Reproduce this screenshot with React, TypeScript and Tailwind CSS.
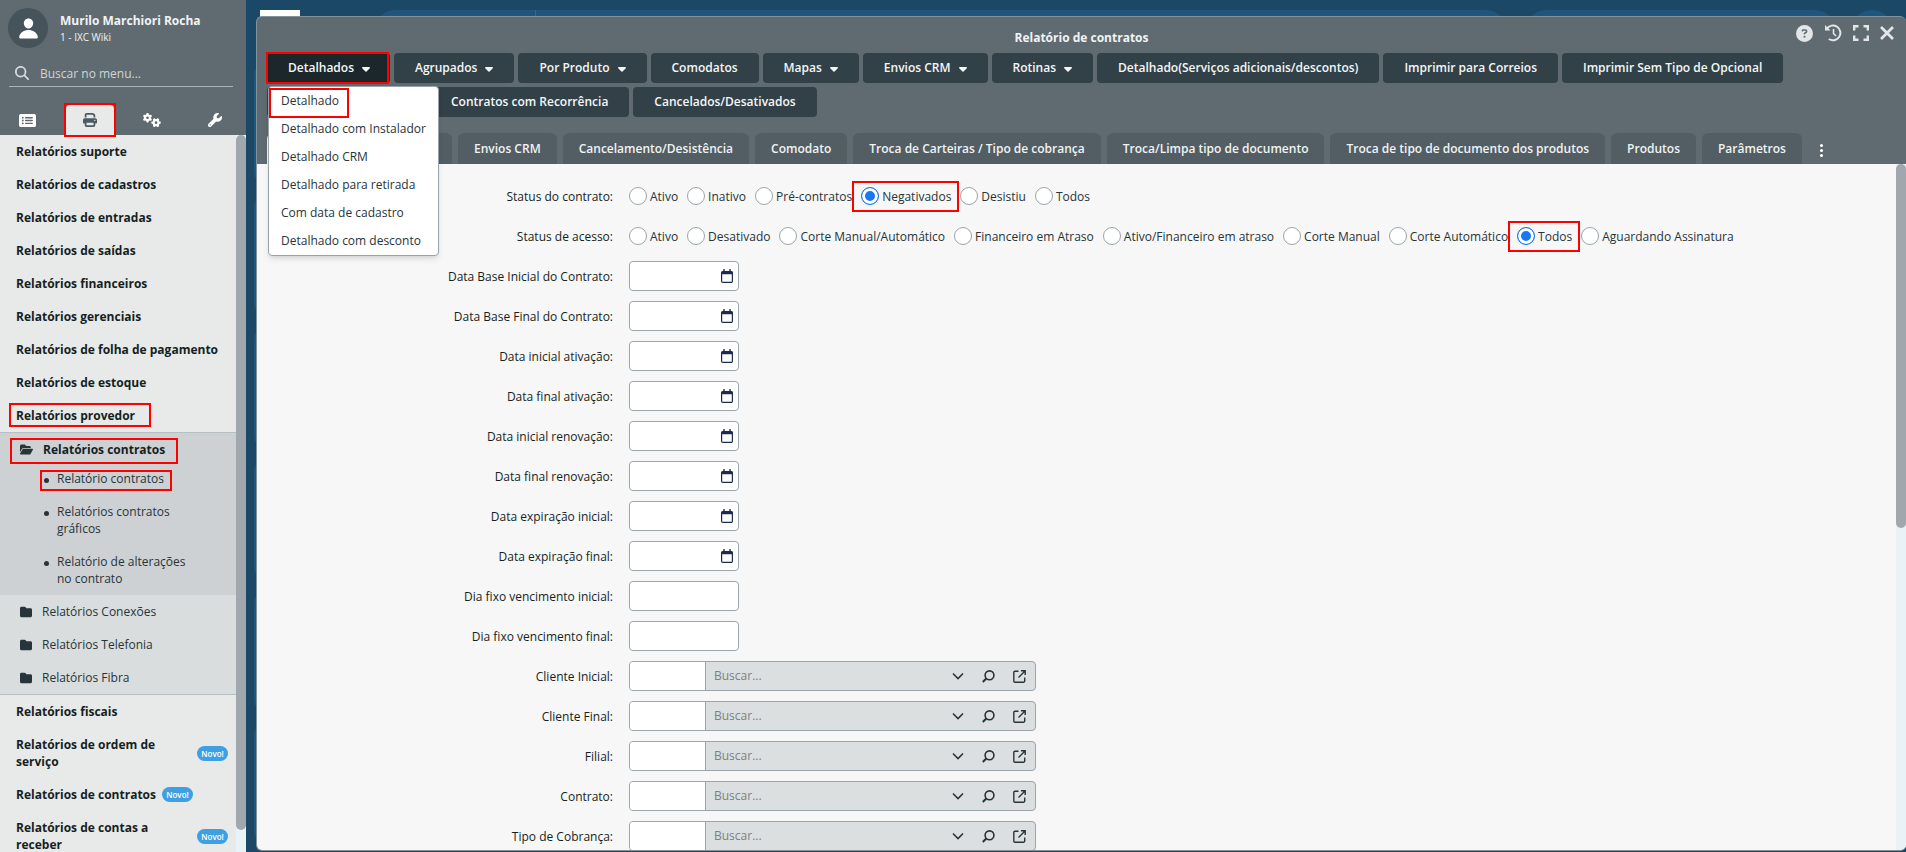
import { useState } from 'react'
import type { ReactNode } from 'react'
import clsx from 'clsx'
import {
  FaCaretDown,
  FaCircleQuestion,
  FaFolder,
  FaFolderOpen,
  FaGears,
  FaMagnifyingGlass,
  FaPrint,
  FaRectangleList,
  FaWrench,
} from 'react-icons/fa6'
import { IoPerson } from 'react-icons/io5'

const MENU_TOPO = [
  'Relatórios suporte',
  'Relatórios de cadastros',
  'Relatórios de entradas',
  'Relatórios de saídas',
  'Relatórios financeiros',
  'Relatórios gerenciais',
  'Relatórios de folha de pagamento',
  'Relatórios de estoque',
]

const SUBMENU_CONTRATOS = [
  { label: 'Relatório contratos', destaque: true },
  { label: 'Relatórios contratos gráficos' },
  { label: 'Relatório de alterações no contrato' },
]

const PASTAS = ['Relatórios Conexões', 'Relatórios Telefonia', 'Relatórios Fibra']

const MENU_BASE = [
  { label: 'Relatórios fiscais' },
  { label: 'Relatórios de ordem de serviço', novo: true },
  { label: 'Relatórios de contratos', novo: true },
  { label: 'Relatórios de contas a receber', novo: true },
]

const ACOES = [
  { label: 'Agrupados', menu: true },
  { label: 'Por Produto', menu: true },
  { label: 'Comodatos' },
  { label: 'Mapas', menu: true },
  { label: 'Envios CRM', menu: true },
  { label: 'Rotinas', menu: true },
  { label: 'Detalhado(Serviços adicionais/descontos)' },
  { label: 'Imprimir para Correios' },
  { label: 'Imprimir Sem Tipo de Opcional' },
]

const OPCOES_DETALHADOS = [
  'Detalhado',
  'Detalhado com Instalador',
  'Detalhado CRM',
  'Detalhado para retirada',
  'Com data de cadastro',
  'Detalhado com desconto',
]

const ABAS = [
  'Envios CRM',
  'Cancelamento/Desistência',
  'Comodato',
  'Troca de Carteiras / Tipo de cobrança',
  'Troca/Limpa tipo de documento',
  'Troca de tipo de documento dos produtos',
  'Produtos',
  'Parâmetros',
]

const STATUS_CONTRATO = ['Ativo', 'Inativo', 'Pré-contratos', 'Negativados', 'Desistiu', 'Todos']

const STATUS_ACESSO = [
  'Ativo',
  'Desativado',
  'Corte Manual/Automático',
  'Financeiro em Atraso',
  'Ativo/Financeiro em atraso',
  'Corte Manual',
  'Corte Automático',
  'Todos',
  'Aguardando Assinatura',
]

const CAMPOS_DATA = [
  { id: 'base_inicial', label: 'Data Base Inicial do Contrato:' },
  { id: 'base_final', label: 'Data Base Final do Contrato:' },
  { id: 'ativacao_inicial', label: 'Data inicial ativação:' },
  { id: 'ativacao_final', label: 'Data final ativação:' },
  { id: 'renovacao_inicial', label: 'Data inicial renovação:' },
  { id: 'renovacao_final', label: 'Data final renovação:' },
  { id: 'expiracao_inicial', label: 'Data expiração inicial:' },
  { id: 'expiracao_final', label: 'Data expiração final:' },
]

const CAMPOS_DIA = [
  { id: 'dia_inicial', label: 'Dia fixo vencimento inicial:' },
  { id: 'dia_final', label: 'Dia fixo vencimento final:' },
]

const CAMPOS_BUSCA = [
  { id: 'cliente_inicial', label: 'Cliente Inicial:' },
  { id: 'cliente_final', label: 'Cliente Final:' },
  { id: 'filial', label: 'Filial:' },
  { id: 'contrato', label: 'Contrato:' },
  { id: 'tipo_cobranca', label: 'Tipo de Cobrança:' },
]

// Moldura vermelha que marca o caminho do tutorial
function Marca({ className }: { className: string }) {
  return <span aria-hidden className={clsx('pointer-events-none absolute z-30 border-2 border-[#fe0000]', className)} />
}

function IconeCalendario() {
  return (
    <svg width="12" height="14" viewBox="0 0 12 14" fill="none">
      <path d="M3 0v3M9 0v3" stroke="#1c2b4b" strokeWidth="1.4" />
      <path d="M0 3.5a1.5 1.5 0 0 1 1.5-1.5h9A1.5 1.5 0 0 1 12 3.5V5.3H0z" fill="#1c2b4b" />
      <path d="M.6 4v8.200a1.200 1.200 0 0 0 1.200 1.200h8.400a1.200 1.200 0 0 0 1.200-1.200V4" stroke="#1c2b4b" strokeWidth="1.2" />
    </svg>
  )
}

function IconeHistorico() {
  return (
    <svg width="18" height="18" viewBox="0 0 18 18" fill="none" stroke="currentColor" strokeWidth="2">
      <path d="M2.8 4.8A7.4 7.4 0 1 1 4.8 15" />
      <path d="M1 1v5.5h5.5z" fill="currentColor" stroke="none" />
      <path d="M9.5 5v4.5l2.5 2.5" strokeWidth="1.6" />
    </svg>
  )
}

function IconeTelaCheia() {
  return (
    <svg width="16" height="16" viewBox="0 0 16 16" fill="none" stroke="currentColor" strokeWidth="2.4">
      <path d="M1.2 5.5V1.2h4.3M10.5 1.2h4.3v4.3M14.8 10.5v4.3h-4.3M5.5 14.8H1.2v-4.3" />
    </svg>
  )
}

function IconeFechar() {
  return (
    <svg width="14" height="14" viewBox="0 0 14 14" fill="none" stroke="currentColor" strokeWidth="2.8">
      <path d="M1 1l12 12M13 1L1 13" />
    </svg>
  )
}

function BarraRolagem({ children }: { children: ReactNode }) {
  return <div className="w-[10px] shrink-0 bg-[#e9f2f6]">{children}</div>
}

function ItemMenu({ label, novo, destaque }: { label: string; novo?: boolean; destaque?: boolean }) {
  return (
    <a href="#" className="relative flex items-center gap-[6px] py-2 pr-2 pl-4 font-bold leading-[17px] text-[#161f23]">
      <span>{label}</span>
      {novo && (
        <span className="flex h-[15px] w-[31px] shrink-0 items-center justify-center rounded-full bg-[#3f9fe3] text-[8px] font-semibold text-white">
          Novo!
        </span>
      )}
      {destaque && <Marca className="top-1 left-[9px] h-6 w-[142px]" />}
    </a>
  )
}

function MenuLateral() {
  return (
    <aside className="flex w-[246px] shrink-0 flex-col bg-[#5f6b70]">
      <div className="flex h-[135px] shrink-0 flex-col pt-2">
        <div className="flex gap-3 pl-2">
          <div className="flex size-10 items-center justify-center rounded-full bg-[#46535a] text-white">
            <IoPerson size={23} />
          </div>
          <div className="pt-1 text-[#f1f3f4]">
            <p className="font-bold leading-[17px]">Murilo Marchiori Rocha</p>
            <p className="text-[10px] leading-4">1 - IXC Wiki</p>
          </div>
        </div>

        <label className="mt-3 mr-[13px] ml-[9px] flex h-[27px] items-center gap-[11px] border-b border-[#a9b2b6] pl-[6px] text-[#d5dadc]">
          <FaMagnifyingGlass size={14} className="shrink-0" />
          <input
            type="text"
            aria-label="Buscar no menu"
            placeholder="Buscar no menu..."
            className="w-full bg-transparent pt-[2px] outline-none placeholder:text-[#d0d5d7]"
          />
        </label>

        <div className="mt-auto flex justify-between pr-[7px] pl-[3px] text-white">
          <button aria-label="Menu" className="flex h-[30px] w-12 items-center justify-center">
            <FaRectangleList size={17} />
          </button>
          <button
            aria-label="Relatórios"
            className="relative flex h-[30px] w-12 items-center justify-center rounded-t bg-[#e7eae9] text-[#4c5a61]"
          >
            <FaPrint size={14} />
            <Marca className="-inset-[2px]" />
          </button>
          <button aria-label="Configurações" className="flex h-[30px] w-12 items-center justify-center">
            <FaGears size={18} />
          </button>
          <button aria-label="Ferramentas" className="flex h-[30px] w-12 items-center justify-center">
            <FaWrench size={14} />
          </button>
        </div>
      </div>

      <div className="flex min-h-0 flex-1">
        <nav className="min-w-0 flex-1 overflow-hidden bg-[#e7eae9]">
          {MENU_TOPO.map(label => <ItemMenu key={label} label={label} />)}
          <ItemMenu label="Relatórios provedor" destaque />

          <div className="border-y border-[#b5bfc4] bg-[#dadddd]">
            <div className="bg-[#cdd1d4]">
              <a href="#" className="relative flex items-center gap-[10px] pt-2 pb-1 pl-5 font-bold leading-[17px] text-[#161f23]">
                <FaFolderOpen size={13} className="text-[#27343a]" />
                Relatórios contratos
                <Marca className="top-[5px] left-[10px] h-[26px] w-[168px]" />
              </a>
              <ul>
                {SUBMENU_CONTRATOS.map(item => (
                  <li key={item.label}>
                    <a href="#" className="relative flex gap-2 py-2 pr-12 pl-11 leading-[17px] text-[#27343a]">
                      <span className="mt-2 size-[5px] shrink-0 rounded-full bg-[#27343a]" />
                      <span>{item.label}</span>
                      {item.destaque && <Marca className="top-2 left-10 h-[21px] w-[132px]" />}
                    </a>
                  </li>
                ))}
              </ul>
            </div>
            {PASTAS.map(label => (
              <a key={label} href="#" className="flex items-center gap-[10px] py-2 pl-5 leading-[17px] text-[#27343a]">
                <FaFolder size={12} />
                {label}
              </a>
            ))}
          </div>

          {MENU_BASE.map(item => <ItemMenu key={item.label} {...item} />)}
        </nav>
        <BarraRolagem>
          <div className="h-[97%] rounded-full bg-[#a0a8ae]" />
        </BarraRolagem>
      </div>
    </aside>
  )
}

// Área de trabalho coberta pela janela do relatório
function Fundo() {
  return (
    <div aria-hidden className="absolute inset-0 overflow-hidden">
      <div className="flex h-[60px] items-start pt-[10px] pl-[14px]">
        <div className="size-10 bg-white" />
        <div className="ml-[75px] h-10 flex-1 rounded-full bg-[#20567b] pl-[160px]">
          <div className="h-full w-px bg-[#2f6a94]" />
        </div>
        <div className="mr-[17px] ml-5 h-10 w-[309px] rounded-full bg-[#20567b]" />
        <div className="mr-[14px] size-10 rounded-full bg-[#20567b]" />
      </div>
      <div className="flex flex-col gap-[17px] pt-[6px] pl-2">
        {[1, 2, 3, 4, 5, 6].map(n => (
          <div key={n} className="h-[115px] w-40 rounded-lg bg-[#20567b]" />
        ))}
      </div>
    </div>
  )
}

const BOTAO = 'flex h-[30px] items-center gap-2 rounded bg-[#324147] px-[21px] font-semibold whitespace-nowrap text-[#f5f7f7]'

function BarraAcoes() {
  const [aberto, setAberto] = useState(true)

  return (
    <div className="flex flex-wrap gap-1 pr-[100px] pl-[10px]">
      <div className="relative">
        <button
          onClick={() => setAberto(!aberto)}
          className="flex h-[30px] items-center gap-2 rounded bg-[#1c272c] pr-5 pl-[21px] font-semibold whitespace-nowrap text-[#f5f7f7]"
        >
          Detalhados
          <FaCaretDown className="h-[13px] w-2" />
        </button>
        <Marca className="-top-px right-px -bottom-px -left-px" />
        {aberto && (
          <ul className="absolute top-[33px] left-px z-20 w-[171px] rounded border border-[#98a4aa] bg-white shadow-md">
            {OPCOES_DETALHADOS.map((opcao, i) => (
              <li key={opcao} className="relative">
                <a href="#" className="flex h-7 items-center pl-3 whitespace-nowrap text-[#27343a]">{opcao}</a>
                {i === 0 && <Marca className="top-px left-0 h-[30px] w-20" />}
              </li>
            ))}
          </ul>
        )}
      </div>
      {ACOES.map(acao => (
        <button key={acao.label} className={BOTAO}>
          {acao.label}
          {acao.menu && <FaCaretDown className="h-[13px] w-2" />}
        </button>
      ))}
      <button aria-label="Contratos" className="h-[30px] w-[159px] rounded bg-[#324147]" />
      <button className={BOTAO}>Contratos com Recorrência</button>
      <button className={BOTAO}>Cancelados/Desativados</button>
    </div>
  )
}

function Abas() {
  return (
    <div className="mt-4 flex gap-[6px] pl-[10px] font-semibold text-[#f1f3f4]">
      <button aria-label="Principal" className="h-[31px] w-[90px] rounded-t-md bg-[#f7f7f7]" />
      <button aria-label="Filtros" className="h-[31px] w-[89px] rounded-t-md bg-[#525e63]" />
      {ABAS.map(aba => (
        <button key={aba} className="h-[31px] rounded-t-md bg-[#525e63] px-4 whitespace-nowrap">{aba}</button>
      ))}
      <button aria-label="Mais abas" className="ml-3 flex flex-col items-center justify-center gap-[2px] pt-1">
        <span className="size-[3px] rounded-full bg-white" />
        <span className="size-[3px] rounded-full bg-white" />
        <span className="size-[3px] rounded-full bg-white" />
      </button>
    </div>
  )
}

function GrupoRadio({ titulo, nome, opcoes, inicial }: { titulo: string; nome: string; opcoes: string[]; inicial: string }) {
  const [valor, setValor] = useState(inicial)

  return (
    <div role="radiogroup" aria-label={titulo} className="flex h-10 items-center gap-4">
      <span className="w-[356px] shrink-0 pt-px text-right leading-[17px]">{titulo}</span>
      <div className="flex gap-[9px]">
        {opcoes.map(opcao => (
          <label key={opcao} className="relative flex items-center gap-[3px] whitespace-nowrap text-[#27343a]">
            <input
              type="radio"
              name={nome}
              checked={valor === opcao}
              onChange={() => setValor(opcao)}
              className="size-[18px] appearance-none rounded-full border border-[#9ba5aa] bg-white checked:border-[#1877f2] checked:bg-[#1877f2] checked:shadow-[inset_0_0_0_3px_#fff]"
            />
            <span className="pt-px leading-[17px]">{opcao}</span>
            {opcao === inicial && <Marca className="-top-[6px] -right-2 -bottom-[7px] -left-[9px]" />}
          </label>
        ))}
      </div>
    </div>
  )
}

function Linha({ id, label, children }: { id: string; label: string; children: ReactNode }) {
  return (
    <div className="flex h-10 items-center gap-4">
      <label htmlFor={id} className="w-[356px] shrink-0 pt-px text-right leading-[17px]">{label}</label>
      {children}
    </div>
  )
}

function CampoBusca({ id, label }: { id: string; label: string }) {
  return (
    <div className="flex h-[30px] w-[407px] overflow-hidden rounded border border-[#9aa6ab] bg-[#dcdfdf] text-[#27343a]">
      <input id={id} type="text" className="w-[76px] border-r border-[#9aa6ab] bg-white px-2 outline-none" />
      <input
        type="text"
        aria-label={`Buscar ${label}`}
        placeholder="Buscar..."
        className="min-w-0 flex-1 bg-transparent pl-2 outline-none placeholder:text-[#7b8083]"
      />
      <div className="flex items-center gap-[18px] pr-[9px]">
        <button type="button" aria-label="Abrir lista">
          <svg width="12" height="12" viewBox="0 0 12 12" fill="none" stroke="currentColor" strokeWidth="1.6">
            <path d="M1 3.5l5 5 5-5" />
          </svg>
        </button>
        <button type="button" aria-label="Pesquisar">
          <svg width="13" height="13" viewBox="0 0 13 13" fill="none" stroke="currentColor" strokeWidth="1.6">
            <circle cx="7.5" cy="5.3" r="4.4" />
            <path d="M4.3 8.5L.8 12" strokeWidth="2" />
          </svg>
        </button>
        <button type="button" aria-label="Abrir cadastro">
          <svg width="13" height="13" viewBox="0 0 13 13" fill="none" stroke="currentColor" strokeWidth="1.4">
            <path d="M5.5 1.2H2A1.2 1.2 0 0 0 .8 2.4V11A1.2 1.2 0 0 0 2 12.2h8.500a1.200 1.200 0 0 0 1.200-1.200V7.500" />
            <path d="M8 .8h4.200V5M12 1L5.500 7.500" />
          </svg>
        </button>
      </div>
    </div>
  )
}

function Formulario() {
  return (
    <form className="min-w-0 flex-1 overflow-hidden pt-3 text-[#161f23]">
      <GrupoRadio titulo="Status do contrato:" nome="status_contrato" opcoes={STATUS_CONTRATO} inicial="Negativados" />
      <GrupoRadio titulo="Status de acesso:" nome="status_acesso" opcoes={STATUS_ACESSO} inicial="Todos" />

      {CAMPOS_DATA.map(campo => (
        <Linha key={campo.id} {...campo}>
          <div className="flex h-[30px] w-[110px] items-center rounded border border-[#9aa6ab] bg-white pr-[5px]">
            <input id={campo.id} type="text" className="h-full min-w-0 flex-1 pl-2 outline-none" />
            <button type="button" aria-label="Abrir calendário"><IconeCalendario /></button>
          </div>
        </Linha>
      ))}

      {CAMPOS_DIA.map(campo => (
        <Linha key={campo.id} {...campo}>
          <input id={campo.id} type="text" className="h-[30px] w-[110px] rounded border border-[#9aa6ab] bg-white px-2 outline-none" />
        </Linha>
      ))}

      {CAMPOS_BUSCA.map(campo => (
        <Linha key={campo.id} {...campo}>
          <CampoBusca {...campo} />
        </Linha>
      ))}
    </form>
  )
}

export default function App() {
  return (
    <div className="flex h-screen overflow-hidden bg-[#1b4866] font-['Open_Sans',sans-serif] text-[12px]">
      <MenuLateral />
      <main className="relative flex min-w-0 flex-1 pt-4 pb-px pl-[10px]">
        <Fundo />
        <section className="relative flex min-w-0 flex-1 flex-col overflow-hidden rounded-md border border-r-0 border-[#86929a] bg-[#5f6b70]">
          <header className="grid h-9 shrink-0 grid-cols-[1fr_auto_1fr] text-[#e3e6e8]">
            <h1 className="col-start-2 pt-3 font-bold leading-[17px] text-[#f1f3f4]">Relatório de contratos</h1>
            <div className="flex h-8 items-center justify-end gap-[11px] pr-3">
              <button aria-label="Ajuda"><FaCircleQuestion size={17} /></button>
              <button aria-label="Histórico"><IconeHistorico /></button>
              <button aria-label="Tela cheia"><IconeTelaCheia /></button>
              <button aria-label="Fechar"><IconeFechar /></button>
            </div>
          </header>
          <BarraAcoes />
          <Abas />
          <div className="flex min-h-0 flex-1 bg-[#f7f7f7]">
            <Formulario />
            <BarraRolagem>
              <div className="h-[53%] rounded-full bg-[#a0a8ae]" />
            </BarraRolagem>
          </div>
        </section>
      </main>
    </div>
  )
}
